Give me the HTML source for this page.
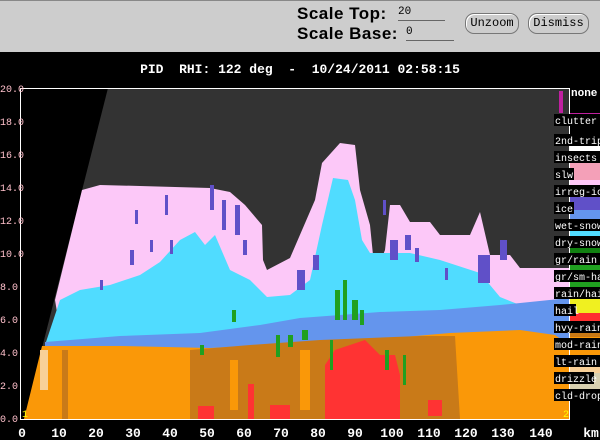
<!DOCTYPE html>
<html><head><style>
body{margin:0;width:600px;height:440px;overflow:hidden;background:#000;font-family:"Liberation Sans",sans-serif}
#top{position:absolute;left:0;top:0;width:600px;height:52px;background:#cdcdcd;border-top:1px solid #888;box-sizing:border-box}
.lbl{position:absolute;font-weight:bold;font-size:17px;color:#000;letter-spacing:0.5px}
.inp{position:absolute;font-size:11px;font-family:"Liberation Mono",monospace;border-bottom:1px solid #666;height:13px;line-height:11px}
.btn{position:absolute;top:12px;height:19px;border:1px solid #777;border-radius:9px;font-family:"Liberation Mono",monospace;font-size:12px;line-height:19px;text-align:center;box-shadow:1px 1px 0 #fff inset}
</style></head><body>
<div id="top">
<div class="lbl" style="left:297px;top:3px">Scale Top:</div>
<div class="lbl" style="left:297px;top:23px">Scale Base:</div>
<div class="inp" style="left:398px;top:6px;width:47px">20</div>
<div class="inp" style="left:406px;top:26px;width:48px">0</div>
<div class="btn" style="left:465px;width:52px">Unzoom</div>
<div class="btn" style="left:528px;width:59px">Dismiss</div>
</div>
<svg width="600" height="440" style="position:absolute;left:0;top:0" font-family="Liberation Mono, monospace">
<text x="300" y="73" fill="#fff" font-size="13" font-weight="bold" text-anchor="middle" xml:space="preserve">PID  RHI: 122 deg  -  10/24/2011 02:58:15</text>
<rect x="21" y="88" width="548" height="331" fill="#333"/>
<polygon points="21,88 108,88 24,419 21,419" fill="#000"/>
<polygon fill="#fcc8f8" points="82,190 100,185 140,186 210,188 230,192 245,205 262,225 263,260 267,270 290,258 315,200 322,163 340,143 355,145 360,190 370,225 375,275 385,250 390,205 400,205 410,222 430,222 440,235 470,235 480,212 490,255 510,255 520,268 569,268 569,330 60,330 55,300"/>
<polygon fill="#50dcff" points="50,330 60,300 80,290 110,285 140,275 160,262 180,240 195,232 205,245 215,235 230,270 250,280 267,297 290,295 310,280 322,225 333,178 348,180 355,200 362,240 370,253 410,253 440,260 480,273 500,297 520,305 569,305 569,345 45,345"/>
<polygon fill="#6495ed" points="45,342 120,336 200,333 260,325 300,318 380,312 440,310 500,305 569,298 569,350 45,350"/>
<polygon fill="#fa9808" points="24,419 42,346 120,346 210,348 300,343 370,340 450,333 520,330 555,335 569,345 569,419"/>
<polygon fill="#c97a18" points="190,350 250,345 320,340 420,336 455,336 460,419 190,419"/>
<rect x="62" y="350" width="6" height="69" fill="#c97a18"/>
<rect x="165" y="355" width="6" height="40" fill="#fa9808"/>
<rect x="230" y="360" width="8" height="50" fill="#fa9808"/>
<rect x="300" y="350" width="10" height="60" fill="#fa9808"/>
<polygon fill="#ff3333" points="325,365 335,350 350,345 365,340 380,355 395,355 400,375 400,419 325,419"/>
<rect x="198" y="406" width="16" height="13" fill="#ff3333"/>
<rect x="270" y="405" width="20" height="14" fill="#ff3333"/>
<rect x="428" y="400" width="14" height="16" fill="#ff3333"/>
<rect x="248" y="384" width="6" height="35" fill="#ff3333"/>
<g fill="#20a020">
<rect x="335" y="290" width="5" height="30"/><rect x="343" y="280" width="4" height="40"/><rect x="352" y="300" width="6" height="20"/><rect x="360" y="310" width="4" height="15"/><rect x="302" y="330" width="6" height="10"/><rect x="232" y="310" width="4" height="12"/><rect x="385" y="350" width="4" height="20"/><rect x="403" y="355" width="3" height="30"/><rect x="200" y="345" width="4" height="10"/><rect x="276" y="335" width="4" height="22"/><rect x="288" y="335" width="5" height="12"/><rect x="330" y="340" width="3" height="30"/></g>
<g fill="#6050c8">
<rect x="210" y="185" width="4" height="25"/><rect x="222" y="200" width="4" height="30"/><rect x="235" y="205" width="5" height="30"/><rect x="243" y="240" width="4" height="15"/><rect x="165" y="195" width="3" height="20"/><rect x="135" y="210" width="3" height="14"/><rect x="130" y="250" width="4" height="15"/><rect x="100" y="280" width="3" height="10"/><rect x="150" y="240" width="3" height="12"/><rect x="170" y="240" width="3" height="14"/>
<rect x="297" y="270" width="8" height="20"/><rect x="313" y="255" width="6" height="15"/><rect x="390" y="240" width="8" height="20"/><rect x="405" y="235" width="6" height="15"/><rect x="415" y="248" width="4" height="14"/><rect x="478" y="255" width="12" height="28"/><rect x="500" y="240" width="7" height="20"/><rect x="383" y="200" width="3" height="15"/><rect x="445" y="268" width="3" height="12"/></g>
<rect x="40" y="350" width="8" height="40" fill="#f8d098"/>
<line x1="20.5" y1="88.5" x2="569" y2="88.5" stroke="#fff"/>
<line x1="20.5" y1="88" x2="20.5" y2="420" stroke="#fff"/>
<line x1="20" y1="419.5" x2="569" y2="419.5" stroke="#fff"/>
<line x1="569.5" y1="88" x2="569.5" y2="420" stroke="#fff"/>
<rect x="559" y="91" width="4" height="22" fill="#c020a0"/>
<g fill="#ffc0cb" font-size="10">
<text x="0" y="92">20.0</text><text x="0" y="125">18.0</text><text x="0" y="158">16.0</text><text x="0" y="191">14.0</text><text x="0" y="224">12.0</text><text x="0" y="257">10.0</text><text x="0" y="290">8.0</text><text x="0" y="323">6.0</text><text x="0" y="356">4.0</text><text x="0" y="389">2.0</text><text x="0" y="422">0.0</text></g>
<g fill="#fff" font-size="13" font-weight="bold" text-anchor="middle">
<text x="22" y="437">0</text><text x="59" y="437">10</text><text x="96" y="437">20</text><text x="133" y="437">30</text><text x="170" y="437">40</text><text x="207" y="437">50</text><text x="244" y="437">60</text><text x="281" y="437">70</text><text x="318" y="437">80</text><text x="355" y="437">90</text><text x="392" y="437">100</text><text x="429" y="437">110</text><text x="466" y="437">120</text><text x="503" y="437">130</text><text x="541" y="437">140</text><text x="591" y="437">km</text></g>
<rect x="570" y="113" width="30" height="7" fill="#c020a0"/><rect x="570" y="120" width="30" height="5" fill="#a8a890"/>
<rect x="570" y="146" width="30" height="14" fill="#fff"/>
<rect x="570" y="163" width="30" height="17" fill="#f4a0b8"/>
<rect x="570" y="180" width="30" height="15" fill="#ffc8f8"/>
<rect x="570" y="195" width="30" height="15" fill="#6050c8"/>
<rect x="570" y="210" width="30" height="17" fill="#6495ed"/>
<rect x="570" y="227" width="30" height="20" fill="#50dcff"/>
<rect x="570" y="247" width="30" height="15" fill="#108010"/>
<rect x="570" y="262" width="30" height="35" fill="#20a020"/>
<rect x="570" y="297" width="30" height="16" fill="#f0f020"/>
<rect x="570" y="313" width="30" height="17" fill="#ff3030"/>
<rect x="570" y="330" width="30" height="7" fill="#c87814"/>
<rect x="570" y="337" width="30" height="23" fill="#fa9808"/>
<rect x="570" y="360" width="30" height="13" fill="#f8d098"/>
<rect x="570" y="373" width="30" height="27" fill="#d8d0b0"/>
<text x="571" y="96" fill="#fff" font-size="11" font-weight="bold">none</text>
<g font-size="10" fill="#fff">
<g fill="#000"><rect x="554" y="114" width="46" height="12"/><rect x="554" y="134" width="46" height="12"/><rect x="554" y="151" width="46" height="12"/><rect x="554" y="168" width="20" height="12"/><rect x="554" y="185" width="46" height="12"/><rect x="554" y="202" width="20" height="12"/><rect x="554" y="219" width="46" height="12"/><rect x="554" y="236" width="46" height="12"/><rect x="554" y="253" width="46" height="12"/><rect x="554" y="270" width="46" height="12"/><rect x="554" y="287" width="46" height="12"/><rect x="554" y="304" width="22" height="12"/><rect x="554" y="321" width="46" height="12"/><rect x="554" y="338" width="46" height="12"/><rect x="554" y="355" width="46" height="12"/><rect x="554" y="372" width="40" height="12"/><rect x="554" y="389" width="46" height="12"/></g>
<text x="555" y="124">clutter</text><text x="555" y="144">2nd-trip</text><text x="555" y="161">insects</text><text x="555" y="178">slw</text><text x="555" y="195">irreg-ice</text><text x="555" y="212">ice</text><text x="555" y="229">wet-snow</text><text x="555" y="246">dry-snow</text><text x="555" y="263">gr/rain</text><text x="555" y="280">gr/sm-ha</text><text x="555" y="297">rain/hail</text><text x="555" y="314">hail</text><text x="555" y="331">hvy-rain</text><text x="555" y="348">mod-rain</text><text x="555" y="365">lt-rain</text><text x="555" y="382">drizzle</text><text x="555" y="399">cld-drop</text></g>
<text x="22" y="417" fill="#ff0" font-size="10">1</text>
<text x="563" y="417" fill="#ff0" font-size="10">2</text>
</svg>
</body></html>
